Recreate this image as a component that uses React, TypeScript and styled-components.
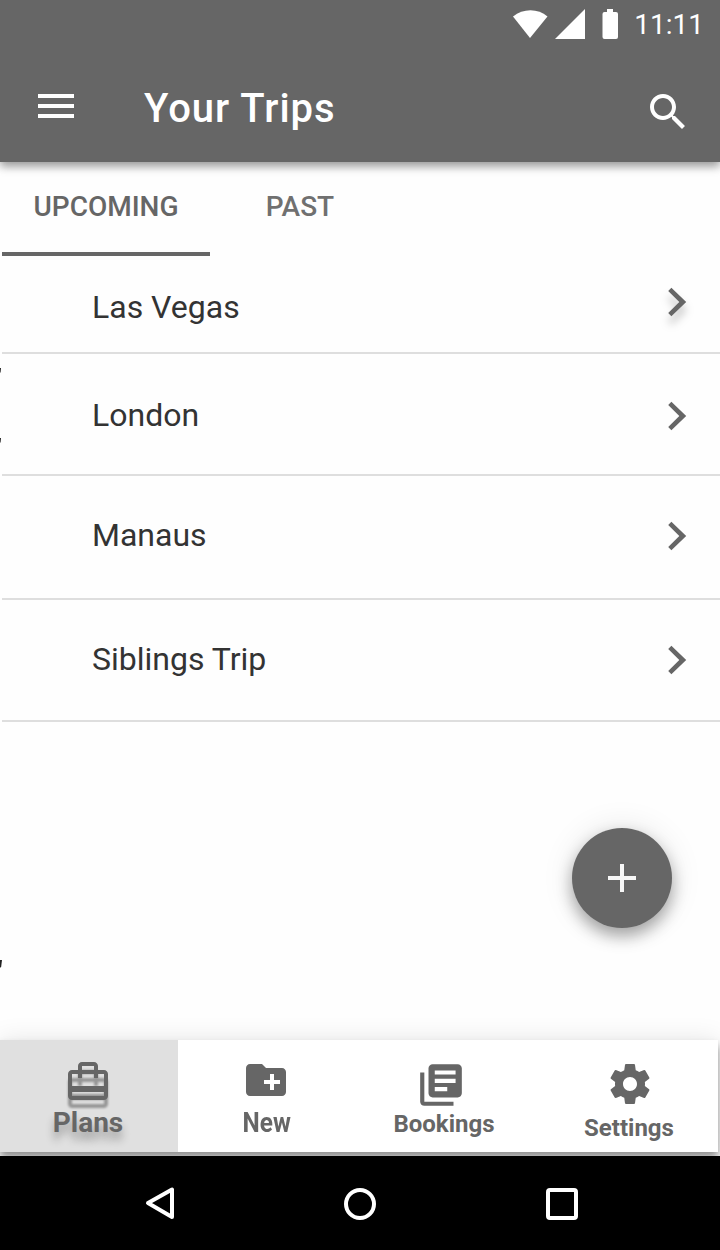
import React from "react";
import styled, { createGlobalStyle, css } from "styled-components";

const GlobalStyle = createGlobalStyle`
  * { box-sizing: border-box; }
  body { margin: 0; background: #fefefe; font-family: Roboto, sans-serif; }
  button { border: 0; padding: 0; background: none; font: inherit; color: inherit; display: block; }
  svg { display: block; }
`;

const Screen = styled.div`
  position: relative;
  display: flex;
  flex-direction: column;
  width: 720px;
  height: 1250px;
  overflow: hidden;
  background: #fefefe;
`;

const Header = styled.header`
  position: relative;
  height: 162px;
  flex: none;
  color: #fff;
  background: #666;
  box-shadow: 0 4px 10px rgba(0, 0, 0, 0.26), 0 4px 8px rgba(0, 0, 0, 0.2);
`;

const StatusBar = styled.div`
  display: flex;
  justify-content: flex-end;
  align-items: center;
  height: 48px;
  padding-right: 16px;
`;

const Clock = styled.span`
  margin-left: 14px;
  padding-top: 2px;
  font-size: 28px;
  line-height: 48px;
`;

const Toolbar = styled.div`
  display: flex;
  align-items: flex-start;
  padding: 34px 28px 0 32px;
`;

const Title = styled.h1`
  flex: 1;
  margin: 1px 0 0 64px;
  font-size: 40px;
  font-weight: 500;
  line-height: 52px;
  letter-spacing: 1px;
`;

const SearchButton = styled.button`
  margin-top: 6px;
`;

const Tabs = styled.nav`
  display: flex;
  height: 94px;
  flex: none;
  padding-left: 2px;
`;

const Tab = styled.button<{ $active?: boolean }>`
  width: ${(p) => (p.$active ? 208 : 180)}px;
  padding-bottom: ${(p) => (p.$active ? 0 : 4)}px;
  border-bottom: ${(p) => (p.$active ? "4px solid #666" : "0")};
  color: ${(p) => (p.$active ? "#666" : "#707070")};
  font-size: 28px;
  font-weight: 500;
  line-height: 90px;
`;

const List = styled.ul`
  flex: 1;
  margin: 0;
  padding: 0 0 0 2px;
  list-style: none;
`;

const Row = styled.li<{ $height: number; $top: number }>`
  display: flex;
  justify-content: space-between;
  align-items: flex-start;
  height: ${(p) => p.$height}px;
  padding: ${(p) => p.$top}px 16px 0 90px;
  border-bottom: 2px solid #dedede;
  color: #333;
  font-size: 32px;
  line-height: 38px;
`;

const Chevron = styled.svg<{ $raised?: boolean }>`
  width: 56px;
  height: 56px;
  margin-top: ${(p) => (p.$raised ? -14 : -8)}px;
  fill: #666;
  overflow: visible;
  ${(p) => p.$raised && css`filter: drop-shadow(0 8px 4px rgba(0, 0, 0, 0.25));`}
`;

const Fab = styled.button`
  position: absolute;
  right: 48px;
  top: 828px;
  display: grid;
  place-items: center;
  width: 100px;
  height: 100px;
  border-radius: 50%;
  background: #666;
  box-shadow: 0 0 32px rgba(0, 0, 0, 0.1), 0 8px 16px rgba(0, 0, 0, 0.33);
`;

const BottomNav = styled.nav`
  position: relative;
  display: flex;
  width: 718px;
  height: 112px;
  margin-bottom: 4px;
  flex: none;
  background: #fff;
  box-shadow: 0 0 24px rgba(0, 0, 0, 0.1), 0 6px 8px rgba(0, 0, 0, 0.4);
`;

const NavItem = styled.button<{ $width: number; $top: number; $active?: boolean; $indent?: number }>`
  display: flex;
  flex: none;
  flex-direction: column;
  align-items: center;
  width: ${(p) => p.$width}px;
  height: 112px;
  padding-top: ${(p) => p.$top}px;
  padding-left: ${(p) => p.$indent ?? 0}px;
  color: #666;
  background: ${(p) => (p.$active ? "#e0e0e0" : "transparent")};
  ${(p) =>
    p.$active &&
    css`
      padding-right: 2px;
      svg { filter: drop-shadow(0 8px 1px rgba(0, 0, 0, 0.33)); }
      span { text-shadow: 0 8px 8px rgba(0, 0, 0, 0.3); }
    `}
`;

const Label = styled.span<{ $size: number; $gap: number; $shift?: number; $narrow?: boolean }>`
  margin-top: ${(p) => p.$gap}px;
  margin-left: ${(p) => p.$shift ?? 0}px;
  font-size: ${(p) => p.$size}px;
  font-weight: 700;
  line-height: 32px;
  ${(p) => p.$narrow && css`transform: scaleX(0.87);`}
`;

const SystemBar = styled.footer`
  position: relative;
  display: flex;
  justify-content: space-between;
  height: 94px;
  flex: none;
  padding: 24px 134px 0 136px;
  background: #000;
`;

const EdgeTick = styled.i<{ $top: number; $width: number; $height: number }>`
  position: absolute;
  left: 0;
  top: ${(p) => p.$top}px;
  width: ${(p) => p.$width}px;
  height: ${(p) => p.$height}px;
  background: #222;
  clip-path: polygon(0 0, 100% 0, 60% 80%, 0 100%);
`;

const Icon = ({ d, size = 48 }: { d: string; size?: number }) => (
  <svg width={size} height={size} viewBox="0 0 24 24" fill="currentColor">
    <path d={d} />
  </svg>
);

const icons = {
  menu: "M3 18h18v-2H3v2zm0-5h18v-2H3v2zm0-7v2h18V6H3z",
  search:
    "M15.5 14h-.79l-.28-.27C15.41 12.59 16 11.11 16 9.5 16 5.91 13.09 3 9.5 3S3 5.91 3 9.5 5.91 16 9.5 16c1.61 0 3.09-.59 4.23-1.57l.27.28v.79l5 4.99L20.49 19l-4.99-5zm-6 0C7.01 14 5 11.99 5 9.5S7.01 5 9.5 5 14 7.01 14 9.5 11.99 14 9.5 14z",
  travel:
    "M20 6h-3V4c0-1.11-.89-2-2-2H9c-1.11 0-2 .89-2 2v2H4c-1.11 0-2 .89-2 2v11c0 1.11.89 2 2 2h16c1.11 0 2-.89 2-2V8c0-1.11-.89-2-2-2zM9 4h6v2H9V4zm11 15H4v-2h16v2zm0-5H4V8h3v2h2V8h6v2h2V8h3v6z",
  folder:
    "M20 6h-8l-2-2H4c-1.11 0-1.99.89-1.99 2L2 18c0 1.11.89 2 2 2h16c1.11 0 2-.89 2-2V8c0-1.11-.89-2-2-2zm-1 8h-3v3h-2v-3h-3v-2h3V9h2v3h3v2z",
  books:
    "M4 6H2v14c0 1.1.9 2 2 2h14v-2H4V6zm16-4H8c-1.1 0-2 .9-2 2v12c0 1.1.9 2 2 2h12c1.1 0 2-.9 2-2V4c0-1.1-.9-2-2-2zm-1 9H9V9h10v2zm-4 4H9v-2h6v2zm4-8H9V5h10v2z",
  settings:
    "M19.43 12.98c.04-.32.07-.64.07-.98s-.03-.66-.07-.98l2.11-1.65c.19-.15.24-.42.12-.64l-2-3.46c-.12-.22-.39-.3-.61-.22l-2.49 1c-.52-.4-1.08-.73-1.69-.98l-.38-2.65C14.46 2.18 14.25 2 14 2h-4c-.25 0-.46.18-.49.42l-.38 2.65c-.61.25-1.17.59-1.69.98l-2.49-1c-.23-.09-.49 0-.61.22l-2 3.46c-.13.22-.07.49.12.64l2.11 1.65c-.04.32-.07.65-.07.98s.03.66.07.98l-2.11 1.65c-.19.15-.24.42-.12.64l2 3.46c.12.22.39.3.61.22l2.49-1c.52.4 1.08.73 1.69.98l.38 2.65c.03.24.24.42.49.42h4c.25 0 .46-.18.49-.42l.38-2.65c.61-.25 1.17-.59 1.69-.98l2.49 1c.23.09.49 0 .61-.22l2-3.46c.12-.22.07-.49-.12-.64l-2.11-1.65zM12 15.5c-1.93 0-3.5-1.57-3.5-3.5s1.57-3.5 3.5-3.5 3.5 1.57 3.5 3.5-1.57 3.5-3.5 3.5z",
};

const trips = [
  { name: "Las Vegas", height: 98, top: 32 },
  { name: "London", height: 122, top: 42 },
  { name: "Manaus", height: 124, top: 40 },
  { name: "Siblings Trip", height: 122, top: 40 },
];

export default function App() {
  return (
    <Screen>
      <GlobalStyle />
      <Header>
        <StatusBar>
          <svg width="108" height="48" fill="#fff">
            <path d="M1 16.5C11 8 26 8 35.500 16.500L18 38z" />
            <path d="M43 39L73 9V39z" />
            <path d="M95 9h6v3h3a2 2 0 0 1 2 2v23a2 2 0 0 1-2 2h-11.500a2 2 0 0 1-2-2V14a2 2 0 0 1 2-2h2.500z" />
          </svg>
          <Clock>11:11</Clock>
        </StatusBar>
        <Toolbar>
          <button aria-label="Menu"><Icon d={icons.menu} /></button>
          <Title>Your Trips</Title>
          <SearchButton aria-label="Search"><Icon d={icons.search} /></SearchButton>
        </Toolbar>
      </Header>
      <Tabs>
        <Tab $active>UPCOMING</Tab>
        <Tab>PAST</Tab>
      </Tabs>
      <List>
        {trips.map((t, i) => (
          <Row key={t.name} $height={t.height} $top={t.top}>
            {t.name}
            <Chevron viewBox="0 0 56 56" $raised={i === 0}>
              <path d="M23.400 13.700L38.200 28 23.400 42.300 20.200 39.100 31.300 28 20.200 16.900z" />
            </Chevron>
          </Row>
        ))}
      </List>
      <BottomNav>
        <NavItem $width={178} $top={18} $active>
          <Icon d={icons.travel} />
          <Label $size={28} $gap={1}>Plans</Label>
        </NavItem>
        <NavItem $width={176} $top={16}>
          <Icon d={icons.folder} />
          <Label $size={28} $gap={3} $shift={2} $narrow>New</Label>
        </NavItem>
        <NavItem $width={174} $top={20}>
          <Icon d={icons.books} size={50} />
          <Label $size={24} $gap={-2} $shift={6}>Bookings</Label>
        </NavItem>
        <NavItem $width={190} $top={20} $indent={14}>
          <Icon d={icons.settings} />
          <Label $size={24} $gap={4} $shift={-2}>Settings</Label>
        </NavItem>
      </BottomNav>
      <SystemBar>
        <svg width="48" height="48" fill="none" stroke="#fff" strokeWidth="4" strokeLinejoin="round">
          <path d="M36 9.500V37L12 23z" />
        </svg>
        <svg width="48" height="48" fill="none" stroke="#fff" strokeWidth="4">
          <circle cx="23" cy="24" r="14" />
        </svg>
        <svg width="48" height="48" fill="none" stroke="#fff" strokeWidth="4">
          <rect x="10" y="10" width="28" height="28" rx="2" />
        </svg>
      </SystemBar>
      <Fab aria-label="Add trip">
        <svg width="28" height="28" fill="#f7f7f7"><path d="M12 0h4v12h12v4H16v12h-4V16H0v-4h12z" /></svg>
      </Fab>
      <EdgeTick $top={368} $width={1} $height={5} />
      <EdgeTick $top={438} $width={1} $height={5} />
      <EdgeTick $top={960} $width={2} $height={8} />
    </Screen>
  );
}
